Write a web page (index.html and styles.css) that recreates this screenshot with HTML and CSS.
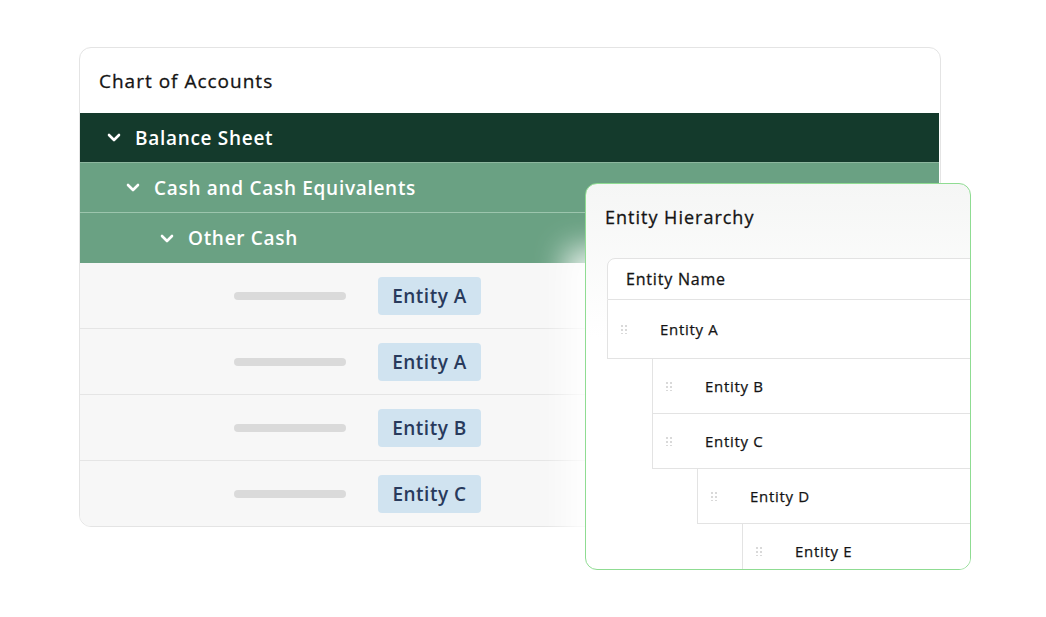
FILE: index.html
```html
<!DOCTYPE html>
<html>
<head>
<meta charset="utf-8">
<link rel="stylesheet" href="styles.css">
</head>
<body>
<div class="stage">
  <section class="coa">
    <div class="coa-title">Chart of Accounts</div>
    <div class="row lvl0"><svg class="chev" viewBox="0 0 14 9"><path d="M2 2 L7 7 L12 2" /></svg><span>Balance Sheet</span></div>
    <div class="row lvl1"><svg class="chev" viewBox="0 0 14 9"><path d="M2 2 L7 7 L12 2" /></svg><span>Cash and Cash Equivalents</span></div>
    <div class="row lvl2"><svg class="chev" viewBox="0 0 14 9"><path d="M2 2 L7 7 L12 2" /></svg><span>Other Cash</span></div>
    <div class="leaf"><div class="bar"></div><div class="pill">Entity A</div></div>
    <div class="leaf"><div class="bar"></div><div class="pill">Entity A</div></div>
    <div class="leaf"><div class="bar"></div><div class="pill">Entity B</div></div>
    <div class="leaf"><div class="bar"></div><div class="pill">Entity C</div></div>
  </section>

  <section class="eh">
    <div class="eh-title">Entity Hierarchy</div>
    <div class="tbl">
      <div class="th">Entity Name</div>
      <div class="tr first"><span class="grip"></span><span class="nm">Entity A</span></div>
      <div class="tr ind1"><span class="grip"></span><span class="nm">Entity B</span></div>
      <div class="tr ind1"><span class="grip"></span><span class="nm">Entity C</span></div>
      <div class="tr ind2"><span class="grip"></span><span class="nm">Entity D</span></div>
      <div class="tr ind3"><span class="grip"></span><span class="nm">Entity E</span></div>
    </div>
  </section>
</div>
</body>
</html>
```

FILE: styles.css
```css
* { box-sizing: border-box; }
html, body { margin: 0; padding: 0; background: #ffffff; }
body {
  width: 1046px;
  height: 617px;
  overflow: hidden;
  font-family: "Open Sans", "Noto Sans", sans-serif;
}
.stage {
  position: relative;
  padding: 47px 0 0 79px;
}
.coa {
  width: 862px;
  border: 1px solid #e4e4e4;
  border-radius: 12px;
  overflow: hidden;
  background: #ffffff;
}
.coa-title {
  height: 65px;
  padding: 20px 0 0 19px;
  font-size: 19px;
  color: #141414;
  letter-spacing: 1px;
  -webkit-text-stroke: 0.3px #141414;
}
.row {
  height: 50px;
  display: flex;
  align-items: center;
  color: #ffffff;
  font-size: 19px;
  font-weight: 600;
  letter-spacing: 0.7px;
  margin-right: 1px;
}
.row .chev {
  width: 14px;
  height: 9px;
  fill: none;
  stroke: #ffffff;
  stroke-width: 2.6;
  stroke-linecap: round;
  stroke-linejoin: round;
  margin-right: 14px;
}
.lvl0 { background: #143a2c; padding-left: 27px; border-bottom: 1px solid #8db79f; }
.lvl1 { background: #6aa183; padding-left: 46px; border-bottom: 1px solid #9cc5ad; }
.lvl2 { background: #6aa183; padding-left: 80px; }
.leaf {
  height: 66px;
  display: flex;
  align-items: center;
  background: #f7f7f7;
  border-top: 1px solid #e5e5e5;
  padding-left: 154px;
}
.lvl2 + .leaf { border-top: none; height: 65px; }
.bar {
  width: 112px;
  height: 8px;
  border-radius: 4px;
  background: #dadada;
}
.pill {
  margin-left: 32px;
  height: 38px;
  width: 103px;
  justify-content: center;
  display: flex;
  align-items: center;
  border-radius: 4px;
  background: #d0e3f0;
  color: #283a5c;
  font-size: 19px;
  font-weight: 600;
  letter-spacing: 0.5px;
}

.eh {
  position: absolute;
  left: 585px;
  top: 183px;
  width: 386px;
  height: 387px;
  border: 1.5px solid #8fdc92;
  border-radius: 12px;
  overflow: hidden;
  background: linear-gradient(180deg, #f5f6f5 0%, #ffffff 40%);
  box-shadow: -30px 55px 30px -10px rgba(255,255,255,0.85);
}
.eh-title {
  padding: 21px 0 0 19px;
  height: 74px;
  font-size: 18px;
  color: #141414;
  letter-spacing: 1px;
  -webkit-text-stroke: 0.3px #141414;
}
.tbl {
  margin-left: 21px;
  width: 420px;
}
.th {
  height: 42px;
  border: 1px solid #e3e3e3;
  border-radius: 8px 0 0 0;
  padding: 9px 0 0 18px;
  font-size: 16px;
  color: #141414;
  background: #ffffff;
  letter-spacing: 0.8px;
  -webkit-text-stroke: 0.3px #141414;
}
.tr {
  height: 55px;
  display: flex;
  align-items: center;
  border-left: 1px solid #e3e3e3;
  border-bottom: 1px solid #e3e3e3;
  background: #ffffff;
  padding-left: 12px;
  font-size: 15px;
  color: #141414;
  letter-spacing: 0.7px;
}
.tr.first { height: 59px; }
.ind1 { margin-left: 45px; }
.ind2 { margin-left: 90px; }
.ind3 { margin-left: 135px; }
.grip {
  width: 8px;
  height: 10px;
  background-image: radial-gradient(circle, #d9d9d9 1.2px, transparent 1.4px);
  background-size: 4px 4px;
  margin-right: 32px;
}
.nm { -webkit-text-stroke: 0.25px #141414; }
```
